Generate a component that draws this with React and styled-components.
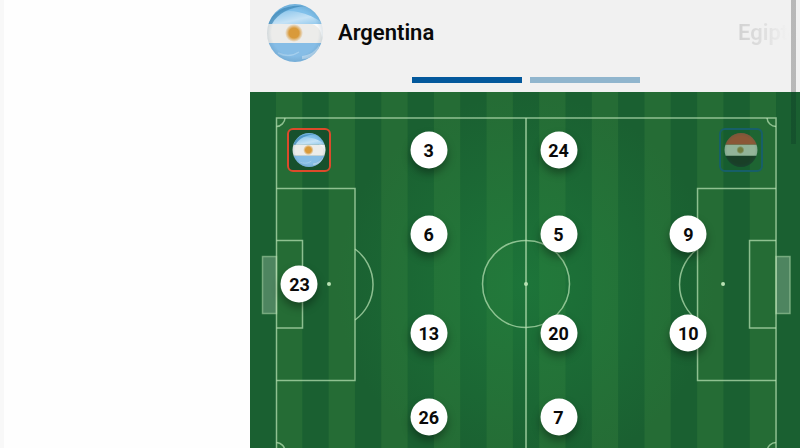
import React, { useState } from 'react'
import styled, { createGlobalStyle } from 'styled-components';

const GlobalStyle = createGlobalStyle`
    * {
        box-sizing: border-box;
    }

    body {
        margin: 0;
        background: #fefefe;
        font-family: Roboto, 'Liberation Sans', sans-serif;
        color: #0a0a0a;
    }

    button {
        padding: 0;
        font: inherit;
        color: inherit;
        cursor: pointer;
    }
`;

const Page = styled.div`
    display: flex;
    height: 100vh;
    overflow: hidden;
    border-left: 4px solid #f8f8f8;
`;

const Side = styled.aside`
    flex: 0 0 30.9%;
`;

const Panel = styled.main`
    flex: 1;
    min-width: 0;
    position: relative;
    background: #f1f1f1;
`;

const Header = styled.header`
    height: 92px;
    overflow: hidden;
`;

const TeamRow = styled.div`
    display: flex;
    align-items: center;
    justify-content: space-between;
    padding: 4px 0 0 16px;
`;

const Team = styled.div`
    display: flex;
    align-items: center;
    gap: 14px;
`;

const TeamName = styled.h2`
    margin: 0;
    font-size: 22px;
    line-height: 28px;
    font-weight: 600;
`;

const NextTeam = styled.div`
    width: 62px;
    overflow: hidden;
    font-size: 22px;
    line-height: 28px;
    font-weight: 600;
    color: transparent;
    background: linear-gradient(90deg, #d2d2d2, #e0e0e0 45%, #f1f1f1 80%);
    background-clip: text;
`;

const Slides = styled.div`
    display: flex;
    justify-content: center;
    gap: 8px;
    padding: 15px 0 0 2px;
`;

const Slide = styled.button`
    width: 20%;
    height: 6px;
    border: 0;
    background: ${({$active}) => $active ? '#03589c' : '#90b5cd'};
`;

const Pitch = styled.section`
    position: relative;
    background: #1a6031;
`;

const Field = styled.svg`
    display: block;
    width: 100%;
    height: auto;
`;

const Badge = styled.button`
    position: absolute;
    top: 36px;
    ${({$side}) => $side}: 37px;
    display: flex;
    align-items: center;
    justify-content: center;
    width: 44px;
    height: 44px;
    border: 2px solid ${({$color}) => $color};
    border-radius: 6px;
    background: ${({$active}) => $active ? '#17502c' : 'rgba(18,88,46,0.35)'};

    svg {
        opacity: ${({$active}) => $active ? 1 : 0.65};
    }
`;

const Player = styled.button`
    position: absolute;
    left: ${({$x}) => $x}%;
    top: ${({$y}) => $y}%;
    transform: translate(-50%, -50%);
    width: 37px;
    height: 37px;
    border: 0;
    border-radius: 50%;
    background: #fff;
    box-shadow: 0 5px 9px rgba(0,0,0,0.35);
    font-size: 18px;
    line-height: 37px;
    font-weight: 700;
`;

const Thumb = styled.div`
    position: absolute;
    top: 0;
    right: 4px;
    z-index: 2;
    width: 5px;
    height: 144px;
    background: linear-gradient(rgba(62,62,62,0.32) 92px, rgba(10,50,35,0.3) 92px);
`;

const players = [
    {number: 23, x: 9, y: 49.8},
    {number: 3, x: 32.5, y: 15},
    {number: 6, x: 32.5, y: 36.8},
    {number: 13, x: 32.5, y: 62.7},
    {number: 26, x: 32.5, y: 84.3},
    {number: 24, x: 56.1, y: 15},
    {number: 5, x: 56.1, y: 36.8},
    {number: 20, x: 56.1, y: 62.7},
    {number: 7, x: 56.1, y: 84.3},
    {number: 9, x: 79.7, y: 36.8},
    {number: 10, x: 79.7, y: 62.7},
];

const Flag = ({id, size, bands, sun, sunSize, gloss}) => (
    <svg width={size} height={size} viewBox='0 0 58 58' aria-hidden='true'>
        <defs>
            <clipPath id={`${id}-clip`}>
                <ellipse cx='29' cy='29' rx='28' ry='29'/>
            </clipPath>
            <radialGradient id={`${id}-shade`} cx='50%' cy='50%' r='50%'>
                <stop offset='80%' stopColor='#1c5379' stopOpacity='0'/>
                <stop offset='100%' stopColor='#1c5379' stopOpacity='0.15'/>
            </radialGradient>
            <radialGradient id={`${id}-sun`} cx='50%' cy='50%' r='50%'>
                <stop offset='55%' stopColor={sun}/>
                <stop offset='100%' stopColor={sun} stopOpacity='0'/>
            </radialGradient>
            <linearGradient id={`${id}-gloss`} x1='0' y1='0' x2='1' y2='1'>
                <stop offset='0%' stopColor='#fff' stopOpacity='0'/>
                <stop offset='60%' stopColor='#fff' stopOpacity='0.55'/>
                <stop offset='100%' stopColor='#fff' stopOpacity='0.1'/>
            </linearGradient>
        </defs>
        <g clipPath={`url(#${id}-clip)`}>
            <rect width='58' height='20' fill={bands[0]}/>
            <rect y='20' width='58' height='19' fill={bands[1]}/>
            <rect y='39' width='58' height='19' fill={bands[2]}/>
            {gloss && (
                <>
                    <path d='M0 20C8 8 20 5 32 8C42 10 50 14 58 20Z' fill={`url(#${id}-gloss)`}/>
                    <path d='M2 20C8 6 20 0 40 2C24 3 12 9 6 20Z' fill='#3d8abb' opacity='0.7'/>
                    <path d='M46 20C52 22 55 26 56 34C58 30 58 24 56 20Z' fill='#fff' opacity='0.8'/>
                    <path d='M36 52C44 51 50 47 53 41C54 47 46 55 36 55Z' fill='#fff' opacity='0.4'/>
                    <path d='M12 49C20 53 27 52 33 48' fill='none' stroke='#c4e2f5' strokeWidth='1.5' opacity='0.5'/>
                </>
            )}
            <circle cx='28' cy='29' r={sunSize} fill={`url(#${id}-sun)`}/>
            <circle cx='29' cy='29' r='29' fill={`url(#${id}-shade)`}/>
        </g>
    </svg>
);

const argentina = {bands: ['#80c0ea', '#ececea', '#86bde6'], sun: '#d99a3a', sunSize: 9, gloss: true};
const egypt = {bands: ['#c8553a', '#d5e2d0', '#1c3023'], sun: '#a3904a', sunSize: 7};

const STRIPE = 500 / 19;

const Markings = () => (
    <Field viewBox='0 0 550 385' aria-hidden='true'>
        <defs>
            <radialGradient id='glow' gradientUnits='userSpaceOnUse' cx='276' cy='192' r='190'>
                <stop offset='0%' stopColor='#1f8540' stopOpacity='0.55'/>
                <stop offset='100%' stopColor='#1f8540' stopOpacity='0'/>
            </radialGradient>
        </defs>
        {Array.from({length: 10}, (_, i) => (
            <rect key={i} x={26 + i * 2 * STRIPE} width={STRIPE} height='385' fill='#256c35'/>
        ))}
        <rect width='550' height='385' fill='url(#glow)'/>
        <g fill='none' stroke='#b9e2b4' strokeOpacity='0.72' strokeWidth='1.5'>
            <rect x='26.5' y='26' width='499.5' height='333'/>
            <path d='M276 26V359' strokeWidth='2' strokeOpacity='0.6'/>
            <circle cx='276' cy='192' r='43.5'/>
            <path d='M26.5 96.5H105V288.5H26.5'/>
            <path d='M26.5 148.5H52.5V236H26.5'/>
            <path d='M105 157A44 44 0 0 1 105 228'/>
            <path d='M526 96.5H447.5V288.5H526'/>
            <path d='M526 148.5H499.5V236H526'/>
            <path d='M447.5 157A44 44 0 0 0 447.5 228'/>
            <path d='M35 26A9 9 0 0 1 26.5 34.5M517 26A9 9 0 0 0 526 34.5'/>
            <path d='M26.5 350.5A9 9 0 0 1 35 359M526 350.5A9 9 0 0 0 517 359'/>
            <rect x='12.5' y='164.5' width='14' height='57' fill='#d7e6da' fillOpacity='0.28' strokeOpacity='0.5'/>
            <rect x='526' y='164.5' width='14' height='57' fill='#d7e6da' fillOpacity='0.28' strokeOpacity='0.5'/>
        </g>
        <g fill='#b9e2b4'>
            <circle cx='276' cy='192' r='2'/>
            <circle cx='79' cy='192' r='2'/>
            <circle cx='473' cy='192' r='2'/>
        </g>
    </Field>
);

const App = () => {
    const [slide, setSlide] = useState(0);

    return (
        <>
            <GlobalStyle/>
            <Page>
                <Side/>
                <Panel>
                    <Thumb/>
                    <Header>
                        <TeamRow>
                            <Team>
                                <Flag id='team' size={58} {...argentina}/>
                                <TeamName>Argentina</TeamName>
                            </Team>
                            <NextTeam>Egipto</NextTeam>
                        </TeamRow>
                        <Slides>
                            <Slide aria-label='Argentina' $active={slide === 0} onClick={() => setSlide(0)}/>
                            <Slide aria-label='Egipto' $active={slide === 1} onClick={() => setSlide(1)}/>
                        </Slides>
                    </Header>
                    <Pitch>
                        <Markings/>
                        <Badge aria-label='Argentina' $side='left' $color='#dc4a2b' $active={slide === 0} onClick={() => setSlide(0)}>
                            <Flag id='home' size={34} {...argentina}/>
                        </Badge>
                        <Badge aria-label='Egipto' $side='right' $color='#175f68' $active={slide === 1} onClick={() => setSlide(1)}>
                            <Flag id='away' size={34} {...egypt}/>
                        </Badge>
                        {players.map(({number, x, y}) => (
                            <Player key={number} $x={x} $y={y}>{number}</Player>
                        ))}
                    </Pitch>
                </Panel>
            </Page>
        </>
    )
};

export default App
